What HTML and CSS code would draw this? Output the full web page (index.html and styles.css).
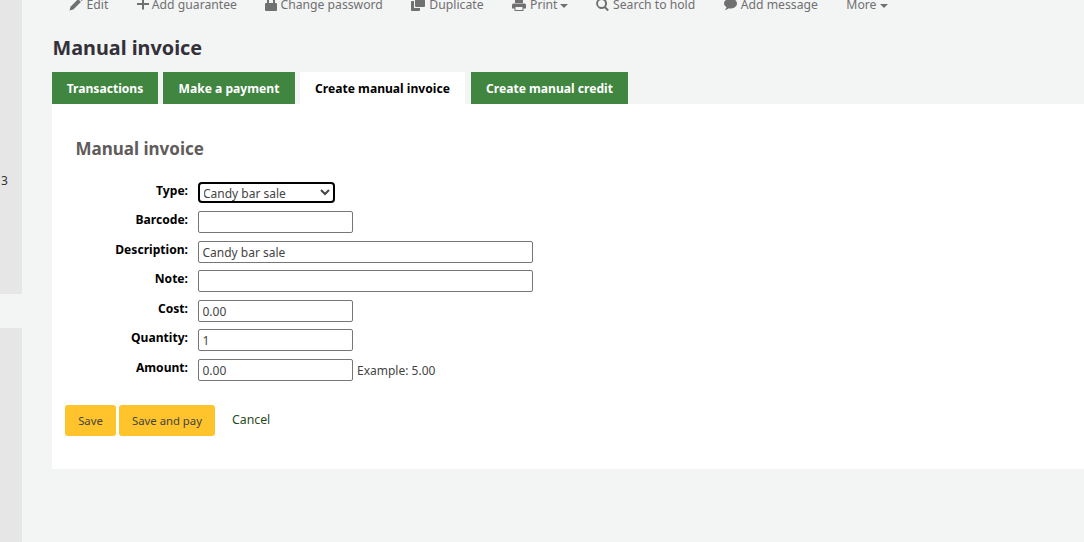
FILE: index.html
```html
<!DOCTYPE html>
<html lang="en">
<head>
<meta charset="utf-8">
<title>Manual invoice</title>
<link rel="stylesheet" href="styles.css">
</head>
<body>
<div class="layout">
  <aside class="sidebar">
    <div class="side-top"><span class="side-num">3</span></div>
    <div class="side-bottom"></div>
  </aside>
  <main class="main">
    <nav class="toolbar">
      <a class="tool"><svg class="icon icon-edit" viewBox="0 0 14 14"><path d="M0.500 13.500l1-3.800 7.600-7.600 2.800 2.800-7.600 7.600zM9.900 1.300l1-1a1 1 0 0 1 1.300 0l1.500 1.500a1 1 0 0 1 0 1.300l-1 1z"/></svg>Edit</a>
      <a class="tool"><svg class="icon icon-plus" viewBox="0 0 12 14"><path d="M5 1.500h2v4.500h5v2h-5v4.500h-2v-4.500h-5v-2h5z"/></svg>Add guarantee</a>
      <a class="tool"><svg class="icon icon-plus" viewBox="0 0 12 14"><path d="M1 6h1v-2a4 4 0 0 1 8 0v2h1a1 1 0 0 1 1 1v6a1 1 0 0 1-1 1h-10a1 1 0 0 1-1-1v-6a1 1 0 0 1 1-1zM4 6h4v-2a2 2 0 0 0-4 0z"/></svg>Change password</a>
      <a class="tool"><svg class="icon" viewBox="0 0 14 14"><path d="M5 0h8a1 1 0 0 1 1 1v8a1 1 0 0 1-1 1h-8a1 1 0 0 1-1-1v-8a1 1 0 0 1 1-1zM1 4h2v6.500a.5.5 0 0 0 .5.5h5.500v2a1 1 0 0 1-1 1h-7a1 1 0 0 1-1-1v-8a1 1 0 0 1 1-1z"/></svg>Duplicate</a>
      <a class="tool"><svg class="icon" viewBox="0 0 14 14"><path d="M3 1h6l2 2v3h-8zM1.500 6.500h11a1.500 1.500 0 0 1 1.500 1.500v3.500h-2.500v2.500h-9v-2.500h-2.500v-3.500a1.500 1.500 0 0 1 1.500-1.500zM3.500 10v3h7v-3z"/></svg>Print<i class="caret"></i></a>
      <a class="tool"><svg class="icon" viewBox="0 0 13 14"><path fill-rule="evenodd" d="M5.500 1a5.500 5.500 0 0 1 4.400 8.800l3 3-1.400 1.400-3-3a5.500 5.500 0 1 1-3-10.200zM5.500 3a3.500 3.500 0 1 0 0 7 3.500 3.500 0 0 0 0-7z"/></svg>Search to hold</a>
      <a class="tool"><svg class="icon" viewBox="0 0 13 14"><path d="M6.500 1.500c3.600 0 6.500 2.200 6.500 5s-2.900 5-6.500 5c-.6 0-1.200-.1-1.700-.2-.8.8-2.200 1.600-4 1.700 1-.9 1.500-1.800 1.700-2.900-1.500-.9-2.500-2.200-2.500-3.600 0-2.800 2.900-5 6.500-5z"/></svg>Add message</a>
      <a class="tool">More<i class="caret caret-more"></i></a>
    </nav>
    <h1 class="page-title">Manual invoice</h1>
    <ul class="tabs">
      <li class="tab tab-transactions">Transactions</li>
      <li class="tab tab-payment">Make a payment</li>
      <li class="tab tab-active">Create manual invoice</li>
      <li class="tab tab-credit">Create manual credit</li>
    </ul>
    <section class="panel">
      <h2 class="panel-title">Manual invoice</h2>
      <form class="form">
        <ol class="fields">
          <li class="field">
            <label class="field-label">Type:</label>
            <select class="select"><option>Candy bar sale</option></select>
          </li>
          <li class="field">
            <label class="field-label">Barcode:</label>
            <input class="input" type="text">
          </li>
          <li class="field">
            <label class="field-label">Description:</label>
            <input class="input input-wide" type="text" value="Candy bar sale">
          </li>
          <li class="field">
            <label class="field-label">Note:</label>
            <input class="input input-wide" type="text">
          </li>
          <li class="field">
            <label class="field-label">Cost:</label>
            <input class="input" type="text" value="0.00">
          </li>
          <li class="field">
            <label class="field-label">Quantity:</label>
            <input class="input" type="text" value="1">
          </li>
          <li class="field">
            <label class="field-label">Amount:</label>
            <input class="input" type="text" value="0.00">
            <span class="hint">Example: 5.00</span>
          </li>
        </ol>
        <div class="actions">
          <button class="btn btn-save" type="button">Save</button>
          <button class="btn btn-pay" type="button">Save and pay</button>
          <a class="cancel">Cancel</a>
        </div>
      </form>
    </section>
  </main>
</div>
</body>
</html>
```

FILE: styles.css
```css
* { box-sizing: border-box; }
html, body { margin: 0; padding: 0; height: 100%; overflow: hidden; }
body {
  background: #f3f4f4;
  font-family: "Noto Sans", "Open Sans", sans-serif;
  font-size: 12px;
  color: #333;
}
.layout { display: flex; height: 542px; }
.sidebar { width: 22px; flex: none; display: flex; flex-direction: column; }
.side-top { height: 294px; background: #e6e6e6; padding: 172px 0 0 1px; line-height: 17px; }
.side-num { color: #333; font-size: 12px; }
.side-bottom { margin-top: 34px; flex: 1; background: #e6e6e6; }
.main { flex: 1; min-width: 0; padding-left: 30px; }

.toolbar {
  display: flex;
  gap: 28.5px;
  margin-top: -4px;
  padding-left: 17px;
  height: 18px;
  font-size: 12.2px;
  line-height: 18px;
  color: #707070;
}
.tool { display: flex; align-items: center; white-space: nowrap; }
.icon { height: 14px; width: auto; margin-right: 4px; fill: #707070; flex: none; position: relative; top: -1px; }
.icon-edit { margin-right: 3.5px; }
.icon-plus { margin-right: 3px; }
.caret {
  margin-left: 2px;
  margin-top: 1px;
  border-left: 4px solid transparent;
  border-right: 4px solid transparent;
  border-top: 4px solid #707070;
}
.caret-more { margin-left: 4px; }

.page-title {
  margin: 18px 0 0 0.6px;
  height: 32px;
  font-size: 19.8px;
  line-height: 32px;
  font-weight: 700;
  color: #333039;
}
.tabs { display: flex; gap: 5px; list-style: none; margin: 8px 0 0; padding: 0; }
.tab {
  height: 32px;
  background: #408540;
  color: #fff;
  font-size: 12.1px;
  font-weight: 700;
  line-height: 33px;
  text-align: center;
  white-space: nowrap;
}
.tab-transactions { width: 106px; }
.tab-payment { width: 132px; }
.tab-active { width: 165px; margin-right: 1px; background: #fff; color: #000; }
.tab-credit { width: 157px; }

.panel { background: #fff; height: 365px; padding: 32px 24px 0; }
.panel-title {
  margin: 0 0 0 -0.5px;
  height: 26px;
  font-size: 17px;
  line-height: 26px;
  font-weight: 700;
  color: #605c5c;
}
.fields { list-style: none; margin: 19.7px 0 0; padding: 0; }
.field { display: flex; align-items: flex-start; height: 29.5px; }
.field-label {
  width: 112px;
  margin-right: 10px;
  text-align: right;
  font-weight: 700;
  font-size: 12.1px;
  color: #000;
  line-height: 17px;
}
.input, .select {
  height: 22px;
  width: 155px;
  padding: 1px 4px 0 3.5px;
  border: 1px solid #767676;
  border-radius: 2px;
  background: #fff;
  font: 12px "Noto Sans", sans-serif;
  color: #444;
  outline: none;
}
.input-wide { width: 335px; }
.select {
  width: 137px;
  height: 21px;
  border: 2px solid #000;
  border-radius: 4px;
  padding: 0;
  text-indent: -1px;
}
.hint { margin-left: 4px; line-height: 24px; color: #444; }

.actions { display: flex; align-items: flex-start; margin: 17px 0 0 -11px; }
.btn {
  height: 31px;
  padding: 0;
  border: 0;
  border-radius: 3px;
  background: #ffc32b;
  font: 11.3px "Noto Sans", sans-serif;
  color: #444;
  margin-right: 3px;
}
.btn-save { width: 51px; }
.btn-pay { width: 96px; }
.cancel { margin-left: 14px; line-height: 29px; color: #284b1b; font-size: 12.3px; }
```
